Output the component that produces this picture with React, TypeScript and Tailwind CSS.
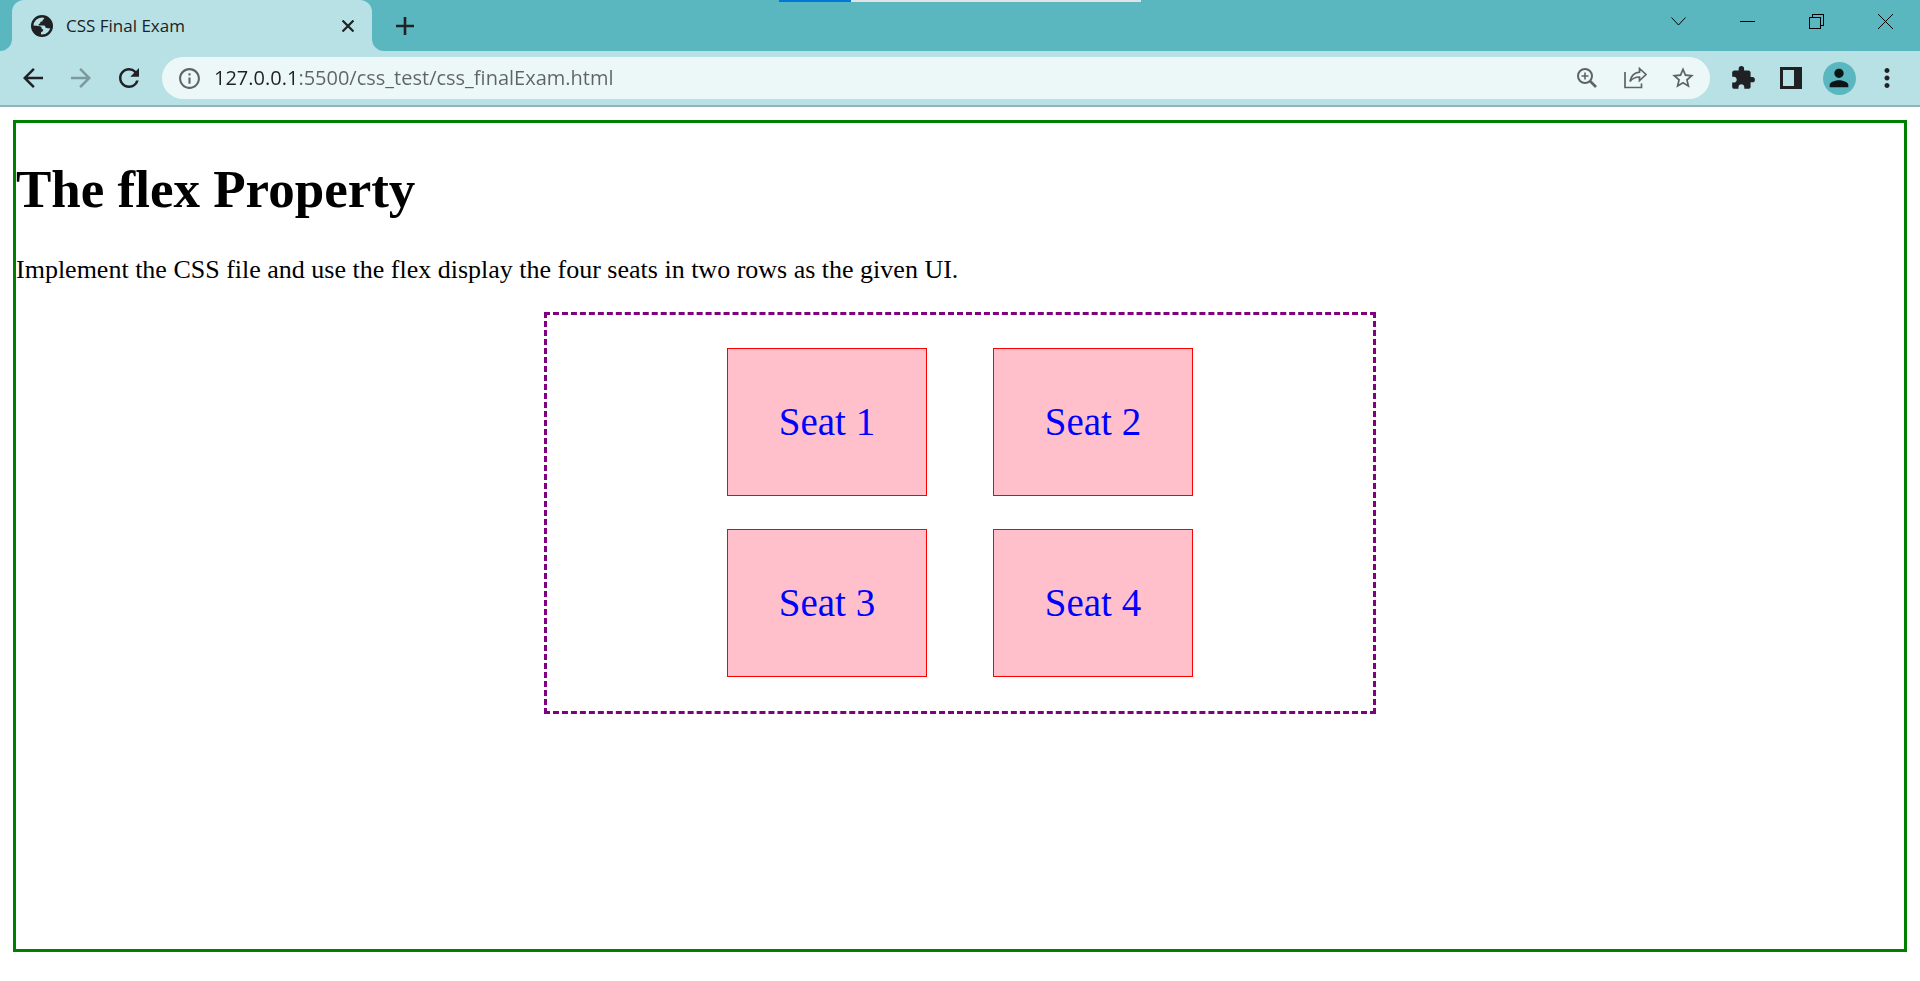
import React from 'react';
import { MdArrowBack, MdArrowForward, MdExtension, MdInfoOutline, MdMoreVert, MdPerson, MdRefresh, MdStarBorder } from 'react-icons/md';

function GlobeIcon() {
  return (
    <svg viewBox="0 0 22 22" className="size-[22px] shrink-0" fill="#202124" aria-hidden="true">
      <circle cx="11" cy="11" r="9.800" fill="none" stroke="#202124" strokeWidth="2.400" />
      <path d="M13 1.500 C13.600 3 13.200 4 12.400 4.600 L11.400 5.400 L11.400 6.600 L9.400 6.800 L9.200 8.600 L7.600 9 L7.800 10.400 L13 10.400 C14 10.600 14.400 11.600 14.600 12.800 L17 13.200 L20.500 13.400 L21 9 L18 3.500 Z" />
      <path d="M1.500 10.600 L5.600 10.800 L9 11.200 C10.400 11.600 10.800 12.600 10.800 14 L12.200 14.600 C12.400 16 11.400 16.800 10.200 17 L9.600 20.500 L5 19 L1.500 14 Z" />
    </svg>
  );
}

function ZoomIcon() {
  return (
    <svg viewBox="0 0 20 20" className="size-5" fill="none" stroke="#5f6368" aria-hidden="true">
      <circle cx="8" cy="8" r="7" strokeWidth="2" />
      <path d="M13 13l6 6" strokeWidth="2.600" />
      <path d="M8 4.500v7M4.500 8h7" strokeWidth="1.600" />
    </svg>
  );
}

function ShareIcon() {
  return (
    <svg viewBox="0 0 24 22" className="h-[22px] w-6" fill="none" stroke="#5f6368" strokeWidth="1.700" aria-hidden="true">
      <path d="M2 5v15.500h16.500v-4" />
      <path d="M16.500 1.500l6.500 6-6.500 6v-3.500c-4 0-7 1.200-9.500 4.500C8 9 11 5.800 16.500 5.200z" strokeLinejoin="miter" />
    </svg>
  );
}

function SidePanelIcon() {
  return (
    <svg viewBox="0 0 22 22" className="size-[22px]" aria-hidden="true">
      <path d="M0 0h22v22H0zM3 3v16h11V3z" fill="#202124" fillRule="evenodd" />
    </svg>
  );
}

function WindowControls() {
  const button = 'flex h-[42px] w-[69px] items-center justify-center';
  return (
    <div className="flex">
      <button className={button} aria-label="Search tabs">
        <svg viewBox="0 0 15 9" className="h-[9px] w-[15px]" fill="none" stroke="#000" aria-hidden="true">
          <path d="M.5.5l7 7.500 7-7.500" />
        </svg>
      </button>
      <button className={button} aria-label="Minimize">
        <span className="h-px w-[15px] bg-black" />
      </button>
      <button className={button} aria-label="Restore">
        <svg viewBox="0 0 15 15" className="size-[15px]" fill="none" stroke="#000" shapeRendering="crispEdges" aria-hidden="true">
          <path d="M.5 3.500h11v11H.5zM3.500 3V.5h11v11H12" />
        </svg>
      </button>
      <button className={button} aria-label="Close window">
        <svg viewBox="0 0 15 15" className="size-[15px]" fill="none" stroke="#000" aria-hidden="true">
          <path d="M0 0l15 15M15 0L0 15" />
        </svg>
      </button>
    </div>
  );
}

function TabStrip() {
  return (
    <div className="flex h-[51px] bg-[#b7e1e4]">
      <div className="w-3 rounded-br-xl bg-[#5ab7c0]" />
      <div className="w-[360px] bg-[#5ab7c0]">
        <div className="flex h-full items-center rounded-t-xl bg-[#b7e1e4] pr-4 pl-[19px]">
          <GlobeIcon />
          <span className="ml-[13px] flex-1 text-[17px] leading-6 text-[#202124]">CSS Final Exam</span>
          <button className="flex size-4 items-center justify-center" aria-label="Close tab">
            <svg viewBox="0 0 12 12" className="size-3" stroke="#202124" strokeWidth="2.200" aria-hidden="true">
              <path d="M.5.5l11 11M11.500.5l-11 11" />
            </svg>
          </button>
        </div>
      </div>
      <div className="flex flex-1 items-start justify-between rounded-bl-xl bg-[#5ab7c0]">
        <button className="ml-4 flex h-[51px] w-[34px] items-center justify-center" aria-label="New tab">
          <svg viewBox="0 0 18 18" className="size-[18px]" stroke="#202124" strokeWidth="2.600" aria-hidden="true">
            <path d="M9 0v18M0 9h18" />
          </svg>
        </button>
        <WindowControls />
      </div>
    </div>
  );
}

function Toolbar() {
  const button = 'flex size-12 items-center justify-center';
  return (
    <div className="flex h-14 items-center border-b-2 border-[#92b4b8] bg-[#b7e1e4] pr-[9px] pl-[9px] text-[#202124]">
      <button className={button} aria-label="Back">
        <MdArrowBack size={30} />
      </button>
      <button className={button} aria-label="Forward">
        <MdArrowForward size={30} className="text-[#7c9a9e]" />
      </button>
      <button className={button} aria-label="Reload">
        <MdRefresh size={30} />
      </button>
      <div className="ml-[9px] flex h-[42px] flex-1 items-center rounded-full bg-[#ecf8f8] pr-[3px] pl-[15px] text-[#5f6368]">
        <MdInfoOutline size={25} className="shrink-0" />
        <input
          aria-label="Address"
          className="ml-3 min-w-0 flex-1 bg-[linear-gradient(90deg,#202124_81px,#5f6368_81px)] bg-clip-text text-xl text-transparent outline-none"
          defaultValue="127.0.0.1:5500/css_test/css_finalExam.html"
        />
        <button className={button} aria-label="Zoom">
          <ZoomIcon />
        </button>
        <button className={button} aria-label="Share">
          <ShareIcon />
        </button>
        <button className={button} aria-label="Bookmark">
          <MdStarBorder size={26} />
        </button>
      </div>
      <div className="ml-[9px] flex">
        <button className={button} aria-label="Extensions">
          <MdExtension size={26} />
        </button>
        <button className={button} aria-label="Side panel">
          <SidePanelIcon />
        </button>
        <button className={button} aria-label="Profile">
          <span className="flex size-[33px] items-center justify-center rounded-full bg-[#5ab7c0]">
            <MdPerson size={28} className="text-[#0b1516]" />
          </span>
        </button>
        <button className={button} aria-label="Menu">
          <MdMoreVert size={30} />
        </button>
      </div>
    </div>
  );
}

const seats = ['Seat 1', 'Seat 2', 'Seat 3', 'Seat 4'];

export default function App() {
  return (
    <div className="flex min-h-screen flex-col bg-white font-['Open_Sans',sans-serif]">
      <header className="relative">
        <TabStrip />
        <Toolbar />
        <div className="absolute top-0 left-[779px] flex h-0.5 w-[362px] bg-[#dfe3e5]">
          <div className="w-[72px] bg-[#0078d7]" />
        </div>
      </header>
      <main className="mx-[13px] mt-[13px] mb-[29px] flex-1 border-3 border-[#008000] font-['Liberation_Serif',serif] text-black">
        <h1 className="mt-9 text-[53px] leading-[60px] font-bold">The flex Property</h1>
        <p className="mt-9 text-[26px] leading-[30px]">
          Implement the CSS file and use the flex display the four seats in two rows as the given UI.
        </p>
        <div className="mx-auto mt-[27px] grid w-[832px] max-w-full grid-cols-[200px_200px] justify-center gap-x-[66px] gap-y-[33px] border-3 border-dashed border-[#800080] pt-[33px] pb-[34px]">
          {seats.map((seat) => (
            <div
              key={seat}
              className="border border-[#ff0000] bg-[#ffc0cb] py-[50px] text-center text-[39px] leading-[46px] text-[#0000ff]"
            >
              {seat}
            </div>
          ))}
        </div>
      </main>
    </div>
  );
}
